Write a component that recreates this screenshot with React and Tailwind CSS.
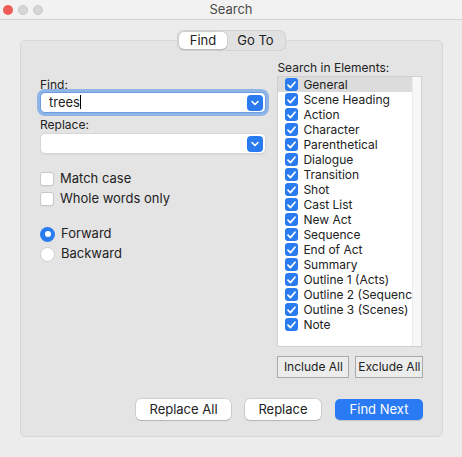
import React from 'react';

const ELEMENTS = [
  'General', 'Scene Heading', 'Action', 'Character', 'Parenthetical', 'Dialogue',
  'Transition', 'Shot', 'Cast List', 'New Act', 'Sequence', 'End of Act', 'Summary',
  'Outline 1 (Acts)', 'Outline 2 (Sequences)', 'Outline 3 (Scenes)', 'Note',
];

const Chevron = () => (
  <svg width="8" height="6" viewBox="0 0 8 6" fill="none">
    <path d="M1 1.5 L4 4.5 L7 1.5" stroke="white" strokeWidth="1.6" strokeLinecap="round" strokeLinejoin="round" />
  </svg>
);

const Check = () => (
  <svg width="9" height="8" viewBox="0 0 9 8" fill="none">
    <path d="M1 4.2 L3.4 6.6 L8 1.2" stroke="white" strokeWidth="1.7" strokeLinecap="round" strokeLinejoin="round" />
  </svg>
);

const ComboField = ({ value, focused }) => (
  <div
    className={`ml-[2px] w-[226px] h-[21px] bg-white rounded-[5px] flex items-center pl-[8px] pr-[2px] ${
      focused ? 'shadow-[0_0_0_3px_#8fb4e6] border border-[#6b9be0]' : 'border border-[#d6d6d6] shadow-[0_1px_1px_rgba(0,0,0,0.06)]'
    }`}
  >
    <span className="flex-1 text-[13px] text-[#222] leading-none">
      {value}
      {focused && <span className="inline-block w-px h-[14px] bg-black align-middle -mt-[2px]" />}
    </span>
    <div className="w-[16px] h-[16px] rounded-[4px] bg-[#2b7bf0] flex items-center justify-center">
      <Chevron />
    </div>
  </div>
);

const CheckRow = ({ label }) => (
  <div className="h-[20px] flex items-center">
    <div className="w-[14px] h-[14px] bg-white border border-[#c9c9c9] rounded-[3px] shadow-[0_1px_1px_rgba(0,0,0,0.05)]" />
    <span className="ml-[6px] text-[13px] text-[#222]">{label}</span>
  </div>
);

const RadioRow = ({ label, on }) => (
  <div className="h-[20px] flex items-center">
    {on ? (
      <div className="w-[15px] h-[15px] rounded-full bg-[#2b7bf0] flex items-center justify-center">
        <div className="w-[6px] h-[6px] rounded-full bg-white" />
      </div>
    ) : (
      <div className="w-[15px] h-[15px] rounded-full bg-white border border-[#d0d0d0]" />
    )}
    <span className="ml-[6px] text-[13px] text-[#222]">{label}</span>
  </div>
);

const PushButton = ({ label, width, primary }) => (
  <div
    className={`h-[21px] rounded-[5px] flex items-center justify-center text-[13px] ${
      primary
        ? 'bg-[#2a7bf3] text-white shadow-[0_1px_1px_rgba(0,0,0,0.15)]'
        : 'bg-white text-[#222] shadow-[0_0_0_0.5px_rgba(0,0,0,0.18),0_1px_1px_rgba(0,0,0,0.12)]'
    }`}
    style={{ width }}
  >
    {label}
  </div>
);

const SquareButton = ({ label, width }) => (
  <div
    className="h-[22px] border border-[#a9a9a9] bg-[#ececec] flex items-center justify-center text-[12px] text-[#222]"
    style={{ width }}
  >
    {label}
  </div>
);

export default function App() {
  return (
    <div className="w-[462px] h-[457px] bg-[#ececec] flex flex-col overflow-hidden" style={{ fontFamily: 'Inter, "Liberation Sans", sans-serif' }}>
      {/* title bar */}
      <div className="h-[20px] bg-[#f2f2f2] border-b border-[#d3d3d3] flex items-center relative">
        <div className="flex items-center gap-[5px] pl-[3px]">
          <div className="w-[10px] h-[10px] rounded-full bg-[#ee5b55]" />
          <div className="w-[10px] h-[10px] rounded-full bg-[#d6d6d6] border border-[#c8c8c8]" />
          <div className="w-[10px] h-[10px] rounded-full bg-[#d6d6d6] border border-[#c8c8c8]" />
        </div>
        <div className="absolute inset-0 flex items-center justify-center text-[13px] text-[#4a4a4a]">Search</div>
      </div>

      <div className="pt-[10px] px-[20px] flex flex-col">
        {/* tabs */}
        <div className="w-[423px] flex justify-center -mb-[11px] relative z-10">
          <div className="h-[21px] w-[109px] bg-[#e1e1e1] border border-[#d2d2d2] rounded-[6px] flex items-center p-px">
            <div className="w-[48px] h-full bg-white rounded-[5px] shadow-[0_0_0_0.5px_rgba(0,0,0,0.15),0_1px_1px_rgba(0,0,0,0.12)] flex items-center justify-center text-[13px] text-[#222]">Find</div>
            <div className="flex-1 flex items-center justify-center text-[13px] text-[#222]">Go To</div>
          </div>
        </div>

        {/* group panel */}
        <div className="w-[423px] h-[397px] bg-[#e4e4e4] border border-[#d8d8d8] rounded-[5px] pt-[20px] pl-[17px] pr-[18px] flex flex-col">
          <div className="flex h-[317px]">
            {/* left column */}
            <div className="w-[240px] pt-[16px] flex flex-col">
              <div className="h-[15px] text-[12px] text-[#222] leading-[15px] pl-[2px]">Find:</div>
              <ComboField value="trees" focused />
              <div className="mt-[4px] h-[16px] text-[12px] text-[#222] leading-[16px] pl-[2px]">Replace:</div>
              <ComboField value="" />
              <div className="mt-[15px] pl-[2px]">
                <CheckRow label="Match case" />
                <CheckRow label="Whole words only" />
              </div>
              <div className="mt-[15px] pl-[2px]">
                <RadioRow label="Forward" on />
                <RadioRow label="Backward" />
              </div>
            </div>

            {/* right column */}
            <div className="w-[147px] flex flex-col">
              <div className="h-[15px] text-[12px] text-[#222] leading-[14px]">Search in Elements:</div>
              <div className="w-[145px] h-[271px] bg-white border border-[#cfcfcf] flex">
                <div className="w-[134px] overflow-hidden">
                  {ELEMENTS.map((name, i) => (
                    <div key={name} className={`h-[15px] flex items-center pl-[7px] ${i === 0 ? 'bg-[#dcdcdc]' : ''}`}>
                      <div className="w-[13px] h-[13px] rounded-[3px] bg-[#2b7bf0] flex items-center justify-center shrink-0">
                        <Check />
                      </div>
                      <span className="ml-[5px] text-[12px] text-[#222] whitespace-nowrap">{name}</span>
                    </div>
                  ))}
                </div>
                <div className="flex-1 bg-[#f8f8f8] border-l border-[#ececec]" />
              </div>
              <div className="mt-[9px] flex gap-[6px]">
                <SquareButton label="Include All" width={72} />
                <SquareButton label="Exclude All" width={68} />
              </div>
            </div>
          </div>

          {/* bottom buttons */}
          <div className="mt-[21px] flex justify-end gap-[14px] pr-px">
            <PushButton label="Replace All" width={95} />
            <PushButton label="Replace" width={76} />
            <PushButton label="Find Next" width={88} primary />
          </div>
        </div>
      </div>
    </div>
  );
}
